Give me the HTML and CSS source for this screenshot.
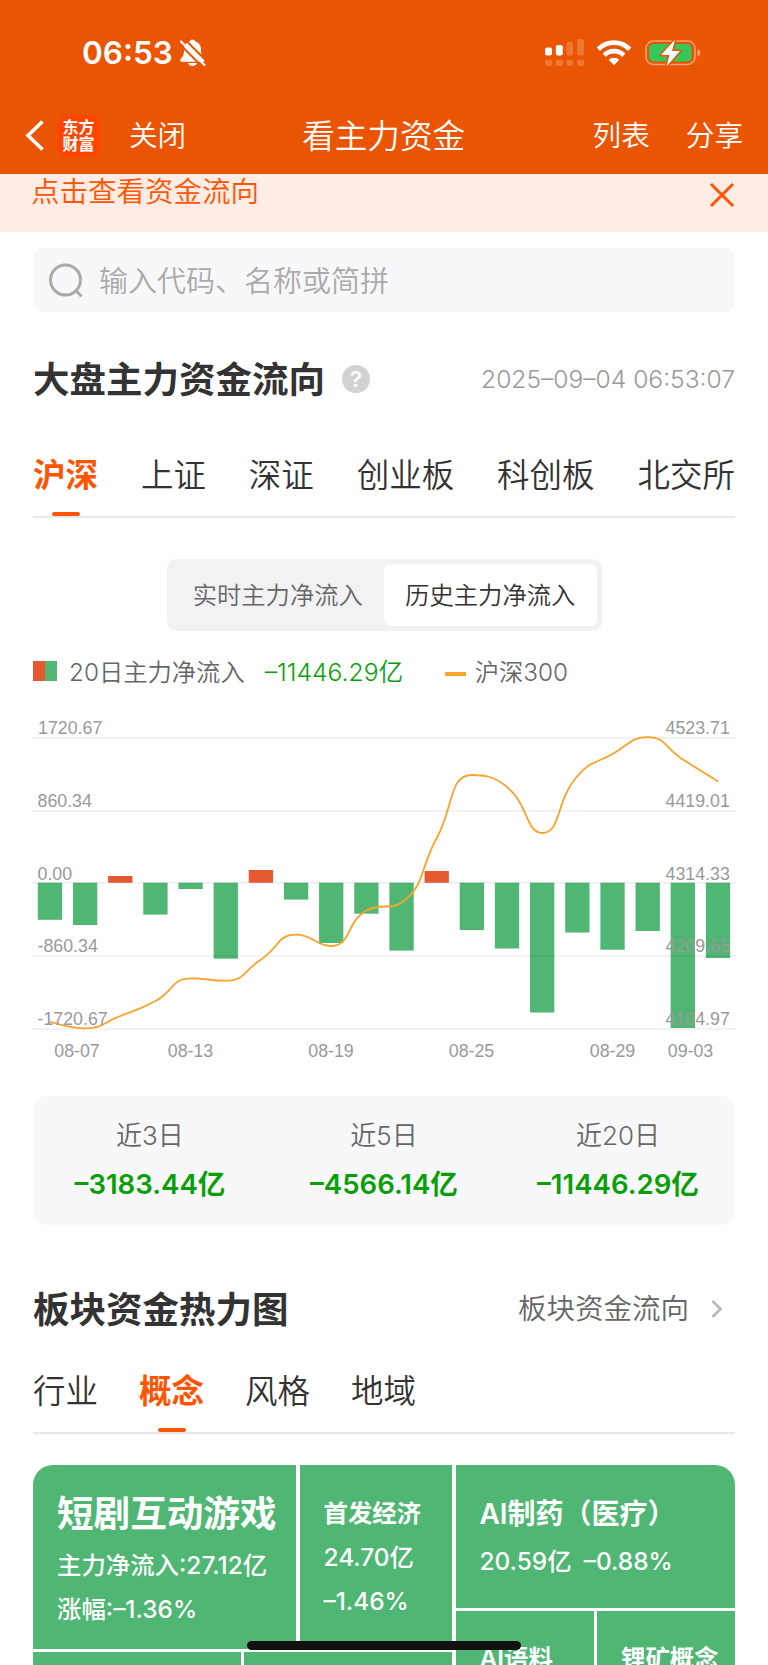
FILE: index.html
```html
<!DOCTYPE html>
<html lang="zh-CN">
<head>
  <meta charset="UTF-8">
  <meta name="viewport" content="width=device-width, initial-scale=1.0">
  <title>看主力资金</title>
  <link rel="stylesheet" href="styles.css">
</head>
<body>

<header class="header">
  <div class="status">
    <span class="time">06:53</span>
    <svg class="bell" width="28" height="28" viewBox="0 0 28 28">
      <path d="M13.500 0.500c-1.600 0-2.600 1-2.900 2.100C6.500 4 5 7 5 11c0 5-1 6.500-3 8.500-1.400 1.500-1 3.200.8 3.200h21.400c1.800 0 2.200-1.700.8-3.200-2-2-3-3.500-3-8.500 0-4-1.500-7-5.600-8.400C16.100 1.500 15.100.5 13.500.5z" fill="#fff"/>
      <path d="M9 24h9c-.5 2-2.300 3-4.500 3S9.500 26 9 24z" fill="#fff"/>
      <path d="M0.500 5L23.500 28M4-1.500L29 23.500" stroke="#ea5504" stroke-width="2"/>
      <path d="M2 2.500L25.500 26" stroke="#fff" stroke-width="2.200" stroke-linecap="round"/>
    </svg>
    <svg class="signal" width="39" height="28" viewBox="0 0 39 28">
      <g fill="#fff">
        <rect x="0" y="8.500" width="7" height="8" rx="2"/>
        <rect x="10.800" y="6" width="7" height="10.500" rx="2"/>
      </g>
      <g fill="#fff" fill-opacity=".2">
        <rect x="21.500" y="3" width="6.500" height="13.500" rx="2"/>
        <rect x="32.200" y="0" width="6.800" height="16.500" rx="2"/>
        <rect x="0" y="20.800" width="7" height="6.200" rx="2"/>
        <rect x="10.800" y="20.800" width="7" height="6.200" rx="2"/>
        <rect x="21.500" y="20.800" width="6.500" height="6.200" rx="2"/>
        <rect x="32.200" y="20.800" width="6.800" height="6.200" rx="2"/>
      </g>
    </svg>
    <svg class="wifi" width="36" height="26" viewBox="0 0 36 26" fill="none" stroke="#fff" stroke-width="4.800">
      <path d="M2.300 9.200a22 22 0 0 1 31.400 0"/>
      <path d="M8.200 15.200a14 14 0 0 1 19.600 0"/>
      <path d="M18 25.200l-5.300-5.400a7.600 7.600 0 0 1 10.600 0z" fill="#fff" stroke="none"/>
    </svg>
    <svg class="battery" width="56" height="28" viewBox="0 0 56 28">
      <rect x="1" y="2" width="49" height="23.500" rx="7.500" fill="none" stroke="#fff" stroke-opacity=".45" stroke-width="1.600"/>
      <path d="M52.500 10v7.500c1.700-.5 2.800-1.900 2.800-3.700s-1.100-3.300-2.800-3.800z" fill="#fff" fill-opacity=".45"/>
      <rect x="4" y="5" width="42.500" height="17.500" rx="4.500" fill="#34c759"/>
      <path d="M30 0.500L16 16h8.500l-3 11.500L35 12h-8z" fill="#fff" stroke="#ea5504" stroke-width="3" paint-order="stroke" stroke-linejoin="round"/>
    </svg>
  </div>
  <nav class="nav">
    <svg class="back" width="20" height="32" viewBox="0 0 20 32"><path d="M17.500 1.500L3 15.500l14.500 14" fill="none" stroke="#fff" stroke-width="3.600"/></svg>
    <div class="logo"><span>东方</span><span>财富</span></div>
    <a class="close">关闭</a>
    <h1>看主力资金</h1>
    <a class="list">列表</a>
    <a>分享</a>
  </nav>
</header>

<div class="notice">
  <span>点击查看资金流向</span>
  <svg width="26" height="26" viewBox="0 0 26 26"><path d="M2 2l22 22M24 2L2 24" stroke="#ff5500" stroke-width="3"/></svg>
</div>

<main class="main">
  <div class="search">
    <svg width="34" height="34" viewBox="0 0 34 34" fill="none" stroke="#aaa" stroke-width="3"><circle cx="16.500" cy="17" r="15"/><path d="M27 27.500l5.500 6"/></svg>
    <span>输入代码、名称或简拼</span>
  </div>

  <div class="heading market">
    <h2>大盘主力资金流向</h2>
    <i class="help">?</i>
    <span class="date">2025–09–04 06:53:07</span>
  </div>

  <div class="tabs between">
    <span class="tab active">沪深</span>
    <span class="tab">上证</span>
    <span class="tab">深证</span>
    <span class="tab">创业板</span>
    <span class="tab">科创板</span>
    <span class="tab">北交所</span>
  </div>

  <div class="switch">
    <span>实时主力净流入</span>
    <span class="on">历史主力净流入</span>
  </div>

  <div class="legend">
    <i class="box"></i>
    <span>20日主力净流入</span>
    <b class="sum">–11446.29亿</b>
    <i class="dash"></i>
    <span class="index">沪深300</span>
  </div>

  <svg class="chart" width="704" height="362" viewBox="32 708 704 362">
    <g id="bars"></g>
    <path class="grid" d="M32 738H736M32 811H736M32 882.700H736M32 956H736M32 1029H736"/>
    <path id="line"/>
    <g class="axis">
      <text x="38" y="733.700">1720.67</text>
      <text x="37.500" y="806.500">860.34</text>
      <text x="37.500" y="879.600">0.00</text>
      <text x="37.500" y="952.400">-860.34</text>
      <text x="37.500" y="1025">-1720.67</text>
      <text x="665.500" y="733.700">4523.71</text>
      <text x="665.500" y="806.500">4419.01</text>
      <text x="665.500" y="879.600">4314.33</text>
      <text x="665.500" y="952.400">4209.65</text>
      <text x="665.500" y="1025">4104.97</text>
    </g>
    <g class="axis days">
      <text x="77" y="1057">08-07</text>
      <text x="190.500" y="1057">08-13</text>
      <text x="331" y="1057">08-19</text>
      <text x="471.500" y="1057">08-25</text>
      <text x="612.500" y="1057">08-29</text>
      <text x="690.500" y="1057">09-03</text>
    </g>
  </svg>

  <div class="summary">
    <div><span>近3日</span><b>–3183.44亿</b></div>
    <div><span>近5日</span><b>–4566.14亿</b></div>
    <div><span>近20日</span><b>–11446.29亿</b></div>
  </div>

  <div class="heading sector">
    <h2>板块资金热力图</h2>
    <span class="more">板块资金流向</span>
    <svg width="12" height="18" viewBox="0 0 12 18"><path d="M1.500 1l8 8-8 8" fill="none" stroke="#bbb" stroke-width="2.800"/></svg>
  </div>

  <div class="tabs second">
    <span class="tab">行业</span>
    <span class="tab active">概念</span>
    <span class="tab">风格</span>
    <span class="tab">地域</span>
  </div>

  <div class="map">
    <div class="left">
      <div class="top">
        <div class="cell first"><h3>短剧互动游戏</h3><p>主力净流入:27.12亿</p><p>涨幅:–1.36%</p></div>
        <div class="cell second-cell"><h4>首发经济</h4><p>24.70亿</p><p>–1.46%</p></div>
      </div>
      <div class="bottom"><div class="cell"></div><div class="cell"></div></div>
    </div>
    <div class="right">
      <div class="cell third"><h4>AI制药（医疗）</h4><p>20.59亿&ensp;–0.88%</p></div>
      <div class="pair">
        <div class="cell"><h4>AI语料</h4></div>
        <div class="cell"><h4>锂矿概念</h4></div>
      </div>
    </div>
  </div>
</main>

<div class="home"></div>

<script>
  var svgNS = "http://www.w3.org/2000/svg";
  var zero = 882.7;
  var step = 35.16;
  // bar ends, left to right
  var bars = [919.8, 925, 876, 914.6, 889, 958.7, 870, 899.6, 943, 913.7, 950.6, 871, 930, 948.5, 1012.5, 932.5, 949.7, 931, 1028, 958];
  var index = [1021.5, 1028.3, 1016, 1001, 978.3, 980.7, 959.5, 934.7, 946, 910.5, 902.5, 838, 775, 787, 833, 776, 754, 737.2, 759.5, 781.5];

  var group = document.getElementById("bars");
  bars.forEach(function (y, i) {
    var r = document.createElementNS(svgNS, "rect");
    r.setAttribute("x", 37.8 + step * i);
    r.setAttribute("y", Math.min(y, zero));
    r.setAttribute("width", 24.3);
    r.setAttribute("height", Math.abs(y - zero));
    r.setAttribute("class", y < zero ? "up" : "down");
    group.appendChild(r);
  });

  function clamp(v, a, b) {
    return Math.max(Math.min(a, b), Math.min(Math.max(a, b), v));
  }

  // smooth curve that never overshoots its points
  var pts = index.map(function (y, i) { return [50 + step * i, y]; });
  var d = "M" + pts[0];
  var out = pts[0];
  for (var i = 1; i < pts.length; i++) {
    var prev = pts[i - 1], p = pts[i], next = pts[i + 1];
    var cp = p, nextOut = p;
    if (next) {
      var a = Math.hypot(p[0] - prev[0], p[1] - prev[1]);
      var b = Math.hypot(next[0] - p[0], next[1] - p[1]);
      nextOut = [0, 1].map(function (k) { return clamp(p[k] + (next[k] - prev[k]) * 0.5 * b / (a + b), p[k], next[k]); });
      cp = [0, 1].map(function (k) { return clamp(p[k] - (nextOut[k] - p[k]) * a / b, prev[k], p[k]); });
      nextOut = [0, 1].map(function (k) { return p[k] + (p[k] - cp[k]) * b / a; });
    }
    d += "C" + out + " " + cp + " " + p;
    out = nextOut;
  }
  document.getElementById("line").setAttribute("d", d);
</script>

</body>
</html>
```
FILE: styles.css
```css
* {
  box-sizing: border-box;
}
body {
  margin: 0;
  height: 1665px;
  overflow: hidden;
  background: #fff;
  color: #333;
  font-family: Inter, "Noto Sans CJK SC", sans-serif;
  font-weight: 350;
  line-height: 1.2;
}
h1, h2, h3, h4, p {
  margin: 0;
}
i {
  font-style: normal;
}
svg {
  display: block;
  flex: none;
}

/* Header */
.header {
  height: 174px;
  background: #ea5504;
  color: #fff;
}
.status {
  display: flex;
  height: 106px;
  align-items: center;
  padding: 0 67px 0 82px;
}
.time {
  width: 97px;
  font-size: 31.500px;
  font-weight: 600;
}
.signal {
  margin-left: auto;
}
.wifi {
  margin: 0 13px 0 12px;
}
.nav {
  display: flex;
  height: 59px;
  align-items: center;
  padding: 0 25px 0 25px;
  font-size: 28.600px;
}
.nav a, .nav h1 {
  padding-top: 2px;
}
.logo {
  width: 43px;
  height: 42px;
  margin: 0 29px 0 12px;
  padding-top: 4px;
  border-radius: 9px;
  background: #ff4600;
  display: flex;
  flex-direction: column;
  align-items: center;
  font-size: 16px;
  font-weight: 700;
  line-height: 17px;
}
.nav h1 {
  margin: 0 auto 0 116px;
  font-size: 32.600px;
  font-weight: inherit;
}
.list {
  margin-right: 36px;
}
.notice {
  height: 58px;
  padding: 0 33px 0 31px;
  background: #ffece5;
  color: #ff5500;
  display: flex;
  justify-content: space-between;
  font-size: 28.500px;
  line-height: 36px;
}
.notice svg {
  margin-top: 8px;
}

.main {
  padding: 16px 33px 0;
}
.search {
  height: 64px;
  padding-left: 16px;
  border-radius: 10px;
  background: #f8f8fb;
  color: #aaa;
  display: flex;
  align-items: center;
  gap: 16px;
  font-size: 29px;
}
.search span {
  padding-top: 4px;
}
.heading {
  display: flex;
  align-items: center;
}
.heading h2 {
  padding-top: 4px;
  font-size: 36.500px;
  font-weight: 600;
}
.market {
  height: 60px;
  margin-top: 37px;
}
.help {
  width: 28px;
  height: 28px;
  margin-left: 17px;
  border-radius: 50%;
  background: #d2d2d5;
  color: #fff;
  font-size: 22px;
  font-weight: 600;
  line-height: 28px;
  text-align: center;
}
.date {
  margin-left: auto;
  padding-top: 2px;
  color: #999;
  font-size: 24.600px;
}

/* Tabs */
.tabs {
  display: flex;
  height: 78px;
  margin-top: 31px;
  border-bottom: 2px solid #e8e8e8;
  font-size: 32.500px;
  line-height: 72px;
}
.between {
  justify-content: space-between;
}
.tab {
  display: flex;
  flex-direction: column;
  align-items: center;
}
.active {
  color: #ff5500;
  font-weight: 600;
}
.active::after {
  content: "";
  width: 28px;
  height: 4px;
  border-radius: 2px;
  background: #ff5500;
}

.switch {
  width: 435px;
  height: 72px;
  margin: 41px auto 0;
  padding: 5px;
  border-radius: 9px;
  background: #f2f2f5;
  color: #666;
  display: flex;
  font-size: 24.300px;
  line-height: 62px;
  text-align: center;
}
.switch span {
  flex: 1;
}
.switch .on {
  border-radius: 7px;
  background: #fff;
  color: #333;
}

/* Chart */
.legend {
  height: 50px;
  margin-top: 15px;
  display: flex;
  align-items: center;
  color: #666;
  font-size: 24.300px;
}
.legend span, .sum {
  padding-top: 3px;
}
.box {
  width: 24px;
  height: 20px;
  margin-right: 12px;
  background: linear-gradient(90deg, #e6582f 50%, #50b674 50%);
}
.sum {
  width: 158px;
  margin-left: 20px;
  color: #0a9f0a;
  font-size: 24.700px;
  font-weight: inherit;
  white-space: nowrap;
}
.dash {
  width: 21px;
  height: 4px;
  margin: 5px 9px 0 22px;
  background: #faa32c;
}
.chart {
  margin: 12px 0 0 -1px;
}
.up {
  fill: #e6582f;
}
.down {
  fill: #50b674;
}
.grid {
  stroke: #000;
  stroke-opacity: .07;
  stroke-width: 1.500;
}
#line {
  fill: none;
  stroke: #faa32c;
  stroke-width: 1.800;
}
.axis {
  fill: #999;
  font-family: "Liberation Sans", sans-serif;
  font-size: 17.800px;
  font-weight: 400;
}
.days {
  text-anchor: middle;
}

.summary {
  height: 129px;
  margin-top: 26px;
  padding-top: 22px;
  border-radius: 14px;
  background: #f8f8fb;
  display: grid;
  grid-template-columns: repeat(3, 1fr);
  text-align: center;
}
.summary span {
  display: block;
  color: #666;
  font-size: 26px;
  line-height: 36px;
}
.summary b {
  display: block;
  margin-top: 8px;
  color: #0a9f0a;
  font-size: 27.600px;
  font-weight: 600;
  line-height: 44px;
}

/* Heat map */
.sector {
  height: 60px;
  margin-top: 54px;
}
.more {
  margin: 0 22px 0 auto;
  color: #666;
  font-size: 28.500px;
}
.sector svg {
  margin-right: 12px;
}
.second {
  margin-top: 17px;
  gap: 41px;
}
.map {
  display: flex;
  gap: 3.500px;
  height: 199.500px;
  margin-top: 31px;
  border-radius: 20px 20px 0 0;
  overflow: hidden;
  color: #fff;
}
.left {
  width: 419px;
}
.right {
  flex: 1;
}
.top, .bottom, .pair {
  display: flex;
  gap: 3.500px;
}
.top {
  height: 183.500px;
  margin-bottom: 3.500px;
}
.bottom .cell, .pair .cell {
  flex: 1;
}
.bottom .cell {
  height: 13px;
}
.cell {
  background: #50b674;
  font-size: 24.400px;
  font-weight: 500;
  white-space: nowrap;
}
.cell h3 {
  font-size: 36.600px;
  font-weight: 600;
  line-height: 50px;
}
.cell h4 {
  font-size: 24.400px;
  font-weight: 600;
  line-height: 44px;
}
.cell p {
  line-height: 44px;
}
.first {
  width: 263px;
  padding: 24px 0 0 24px;
}
.first h3 {
  margin-bottom: 4px;
}
.second-cell {
  flex: 1;
  padding: 26px 0 0 24px;
}
.third {
  height: 142.500px;
  margin-bottom: 3.500px;
  padding: 27px 0 0 24px;
}
.third h4 {
  margin-bottom: 3px;
  font-size: 28px;
}
.pair .cell {
  height: 53.500px;
  padding: 25px 0 0 24px;
}
.home {
  position: absolute;
  left: 247px;
  top: 1641px;
  width: 274px;
  height: 9px;
  border-radius: 5px;
  background: #111;
}
```
